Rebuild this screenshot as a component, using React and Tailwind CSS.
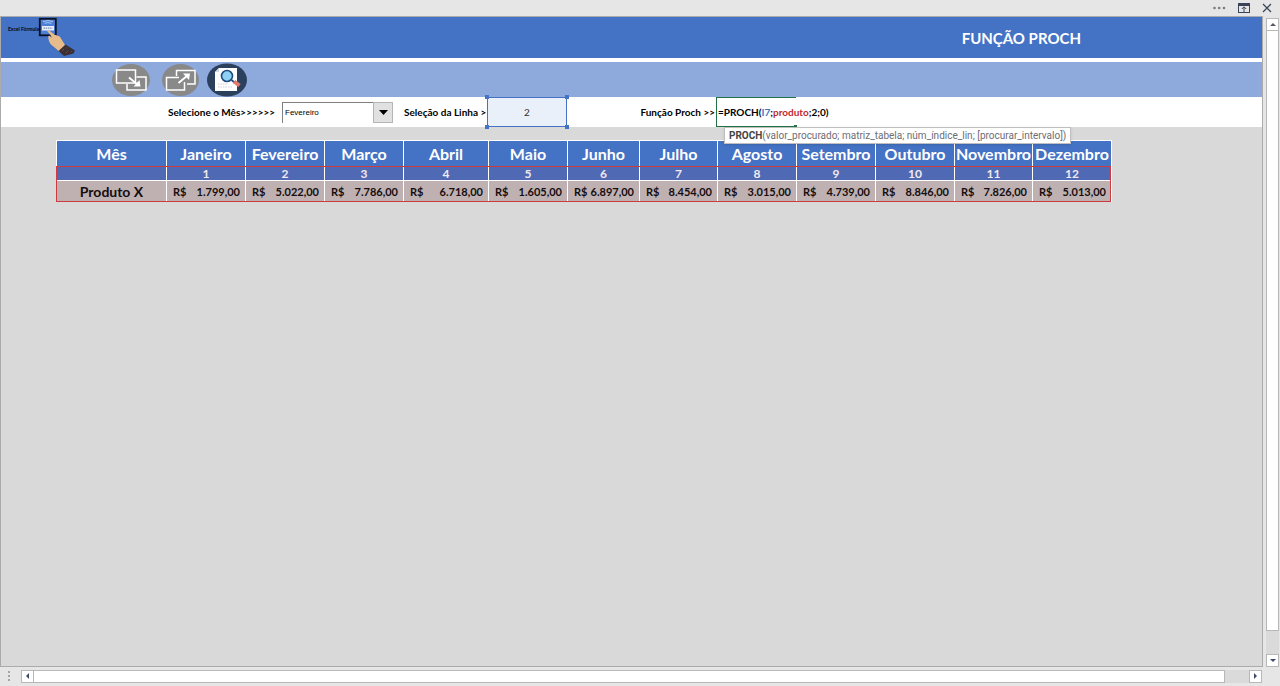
import { useState } from "react";

const MONTHS = [
  { name: "Janeiro", value: "1.799,00", col: "w-[79px]" },
  { name: "Fevereiro", value: "5.022,00", col: "w-[79px]" },
  { name: "Março", value: "7.786,00", col: "w-[79px]" },
  { name: "Abril", value: "6.718,00", col: "w-[85px]" },
  { name: "Maio", value: "1.605,00", col: "w-[79px]" },
  { name: "Junho", value: "6.897,00", col: "w-[72px]" },
  { name: "Julho", value: "8.454,00", col: "w-[78px]" },
  { name: "Agosto", value: "3.015,00", col: "w-[79px]" },
  { name: "Setembro", value: "4.739,00", col: "w-[79px]" },
  { name: "Outubro", value: "8.846,00", col: "w-[79px]" },
  { name: "Novembro", value: "7.826,00", col: "w-[78px]" },
  { name: "Dezembro", value: "5.013,00", col: "w-[79px]" },
];

function WindowBar() {
  return (
    <header className="flex h-4 shrink-0 items-center justify-end gap-3 pr-2 text-[#3b4358]">
      <button type="button" aria-label="Mais opções">
        <svg width="13" height="10" viewBox="0 0 13 10" fill="#7b7b7f">
          <circle cx="1.5" cy="5" r="1.3" />
          <circle cx="6.2" cy="5" r="1.3" />
          <circle cx="11" cy="5" r="1.3" />
        </svg>
      </button>
      <button type="button" aria-label="Opções de exibição">
        <svg width="12" height="10" viewBox="0 0 12 10" fill="none" stroke="currentColor">
          <rect x="0.5" y="0.5" width="11" height="9" />
          <path d="M0.5 2h11" strokeWidth="2" />
          <path d="M6 9V4M3.8 6L6 3.8 8.2 6" />
        </svg>
      </button>
      <button type="button" aria-label="Fechar">
        <svg width="10" height="10" viewBox="0 0 10 10" fill="none" stroke="currentColor" strokeWidth="1.2">
          <path d="M1 1l8 8M9 1L1 9" />
        </svg>
      </button>
    </header>
  );
}

function Logo() {
  return (
    <div className="flex items-start pl-[7px]">
      <span className="mt-2 w-[30px] text-[5px] leading-2 font-black whitespace-nowrap text-[#0b1020]">
        Excel Fórmula
      </span>
      <svg width="38" height="40" viewBox="0 0 38 40" aria-hidden="true">
        <rect x="1.8" y="1.8" width="16" height="16.5" fill="#4c7fd6" stroke="#0b1020" strokeWidth="1.8" />
        <path d="M5 4.5q5-2 10 0M6.5 6.3q3.5-1.5 7 0" stroke="#a9c8f5" strokeWidth="1" fill="none" />
        <rect x="4" y="9" width="12" height="4.5" fill="#e8effa" />
        <path d="M5.5 11.2h9" stroke="#7a8db0" strokeWidth="1.2" strokeDasharray="1.5 .7" />
        <path
          d="M9 14q1.200-1.500 2.800 0l4.500 3.500 5.500 2 5.500 9-6 6-6.500-5.500q-3.500-2-4.500-8-.3-2.500 1-2.500l2.200 2.500q.5-2-4.500-7z"
          fill="#e8bb8a"
        />
        <path d="M20.500 34l7-6.500 9.500 6-1.500 3-9.500 2.500z" fill="#3a3035" />
        <path d="M24 34l2-2M28 36l2-2M28 31.500l1-1M33 35l1-1" stroke="#7d4438" />
      </svg>
    </div>
  );
}

function Toolbar() {
  return (
    <div className="mt-1 flex h-[35px] shrink-0 items-center bg-[#8ea9db] pl-[111px]">
      <button type="button" aria-label="Recolher janela" className="mr-3">
        <svg width="38" height="32" viewBox="0 0 38 32">
          <ellipse cx="19" cy="16" rx="19" ry="16" fill="#898989" />
          <g fill="none" stroke="#fff" strokeWidth="1.5">
            <path d="M15 20v6h19V13h-9.5" />
            <rect x="4.500" y="6" width="19" height="13" />
            <path d="M17 13.500l9 7.500" strokeWidth="2" />
          </g>
          <path d="M28.500 22.500h-7l6-6.500z" fill="#fff" />
        </svg>
      </button>
      <button type="button" aria-label="Expandir janela" className="mr-2">
        <svg width="37" height="32" viewBox="0 0 37 32">
          <ellipse cx="18.500" cy="16" rx="18.500" ry="16" fill="#898989" />
          <g fill="none" stroke="#fff" strokeWidth="1.5">
            <path d="M14.500 12V6.500h18.500V20h-8" />
            <path d="M17 13.500H4.500V26h18v-8" />
            <path d="M16.500 19l9-7.500" strokeWidth="2" />
          </g>
          <path d="M28 9.500h-7l6 6.500z" fill="#fff" />
        </svg>
      </button>
      <button type="button" aria-label="Pesquisar">
        <svg width="40" height="34" viewBox="0 0 40 34">
          <ellipse cx="20" cy="17" rx="20" ry="16.5" fill="#2b405c" />
          <path d="M12 5h18v23H8V9z" fill="#fff" />
          <path d="M12 5v4H8z" fill="#cfd8e4" />
          <path d="M11 21h9M11 24h14" stroke="#c8d0da" strokeDasharray="1.5 1" />
          <circle cx="20" cy="13" r="5.5" fill="#8fd0f5" stroke="#1f4a80" strokeWidth="1.6" />
          <path d="M24.500 17l3 2.500" stroke="#1f4a80" strokeWidth="1.8" />
          <path d="M27 18.500l5.500 4" stroke="#e07a6c" strokeWidth="4" />
        </svg>
      </button>
    </div>
  );
}

function SelectionHandles() {
  return (
    <>
      <span className="pointer-events-none absolute -top-0.5 -left-0.5 size-1 bg-[#4472c4]" />
      <span className="pointer-events-none absolute -top-0.5 -right-0.5 size-1 bg-[#4472c4]" />
      <span className="pointer-events-none absolute -bottom-0.5 -left-0.5 size-1 bg-[#4472c4]" />
      <span className="pointer-events-none absolute -right-0.5 -bottom-0.5 size-1 bg-[#4472c4]" />
    </>
  );
}

function InputRow() {
  const [month, setMonth] = useState("Fevereiro");
  const [line, setLine] = useState("2");

  return (
    <div className="flex h-[30px] shrink-0 items-center bg-white pl-[167px] text-[10px] font-bold whitespace-nowrap text-black">
      <label htmlFor="month" className="w-[114px]">
        Selecione o Mês&gt;&gt;&gt;&gt;&gt;&gt;
      </label>
      <div className="relative mr-[11px] w-[111px]">
        <select
          id="month"
          value={month}
          onChange={(e) => setMonth(e.target.value)}
          className="block h-[21px] w-full appearance-none border-t border-l border-[#808080] bg-white pl-0.5 font-['Liberation_Sans',sans-serif] text-[8px] font-normal"
        >
          {MONTHS.map((m) => (
            <option key={m.name}>{m.name}</option>
          ))}
        </select>
        <span className="pointer-events-none absolute inset-y-0 right-0 flex w-5 items-center justify-center border border-[#b5b5b5] bg-[#e1e1e1]">
          <svg width="9" height="5" viewBox="0 0 9 5">
            <path d="M0 0h9L4.5 5z" />
          </svg>
        </span>
      </div>
      <label htmlFor="line" className="w-[83px]">
        Seleção da Linha &gt;
      </label>
      <div className="relative w-20 self-stretch">
        <input
          id="line"
          value={line}
          onChange={(e) => setLine(e.target.value)}
          className="size-full border border-[#4472c4] bg-[#e9f0f9] text-center font-normal text-[#333]"
        />
        <SelectionHandles />
      </div>
      <span id="formula-label" className="w-[149px] pr-px text-right">
        Função Proch &gt;&gt;
      </span>
      <div className="relative flex w-20 items-center self-stretch border-y border-l border-[#217346] pl-px">
        <div role="textbox" tabIndex={0} aria-labelledby="formula-label">
          =PROCH(<span className="text-[#4472c4]">I7</span>;
          <span className="text-[#c2272d]">produto</span>;2;0)
        </div>
        <span className="absolute -right-px -bottom-0.5 size-[3px] bg-[#217346]" />
        <div
          role="tooltip"
          className="absolute top-[29px] left-[7px] z-10 border border-[#bfbfbf] bg-white px-1 font-['Roboto',sans-serif] text-[10px] leading-[15px] font-normal text-[#6d6d75] shadow-sm"
        >
          <b className="text-[#444]">PROCH</b>(valor_procurado; matriz_tabela; núm_índice_lin; [procurar_intervalo])
        </div>
      </div>
    </div>
  );
}

function ProductTable() {
  return (
    <div className="relative mt-[13px] ml-[55px] w-[1055px] shrink-0">
      <table className="w-full table-fixed border-separate border-spacing-0 border-t border-r border-white text-center font-bold">
        <colgroup>
          <col className="w-[110px]" />
          {MONTHS.map((m) => (
            <col key={m.name} className={m.col} />
          ))}
        </colgroup>
        <thead>
          <tr className="h-[26px] bg-[#4472c4] text-[16px] leading-5 text-white">
            <th className="border-l border-white p-0">Mês</th>
            {MONTHS.map((m) => (
              <th key={m.name} className="border-l border-white p-0 whitespace-nowrap">
                {m.name}
              </th>
            ))}
          </tr>
        </thead>
        <tbody>
          <tr className="h-[14px] bg-[#4f69b5] text-[12px] leading-3 text-[#f3e9ee]">
            <td className="border-b border-l border-white p-0" />
            {MONTHS.map((m, i) => (
              <td key={m.name} className="border-b border-l border-white p-0">
                {i + 1}
              </td>
            ))}
          </tr>
          <tr className="h-[21px] bg-[#bfb1b2] leading-5 text-[#150d0f]">
            <th className="border-l border-white p-0 text-[14px]">Produto X</th>
            {MONTHS.map((m) => (
              <td key={m.name} className="border-l border-white py-0 pr-[5px] pl-1.5 text-[11px]">
                <div className="flex justify-between">
                  <span>R$</span>
                  <span>{m.value}</span>
                </div>
              </td>
            ))}
          </tr>
        </tbody>
      </table>
      <div className="pointer-events-none absolute inset-x-0 top-[26px] bottom-0 border border-[#cf3a40]" />
    </div>
  );
}

function VerticalScroll() {
  return (
    <div className="flex w-[17px] shrink-0 flex-col pt-0.5 pr-px pl-[3px]">
      <button type="button" aria-label="Rolar para cima" className="flex h-[13px] items-center justify-center border border-[#b8b8b8] bg-white">
        <svg width="6" height="3" viewBox="0 0 6 3" fill="#555a66">
          <path d="M0 3h6L3 0z" />
        </svg>
      </button>
      <div className="flex-1 bg-[#dadada] pb-[23px]">
        <div className="h-full border border-t-0 border-[#b8b8b8] bg-white" />
      </div>
      <button type="button" aria-label="Rolar para baixo" className="flex h-[13px] items-center justify-center border border-[#b8b8b8] bg-white">
        <svg width="6" height="3" viewBox="0 0 6 3" fill="#3f4a6b">
          <path d="M0 0h6L3 3z" />
        </svg>
      </button>
    </div>
  );
}

function HorizontalScroll() {
  return (
    <footer className="flex h-[19px] shrink-0 items-center pr-[18px] pb-px pl-2">
      <svg width="3" height="10" viewBox="0 0 3 10" fill="#a5a5a5" className="mr-2.5">
        <path d="M0 0h2v2H0zM0 4h2v2H0zM0 8h2v2H0z" />
      </svg>
      <button type="button" aria-label="Rolar para a esquerda" className="flex h-[13px] w-[13px] items-center justify-center border border-[#b8b8b8] bg-white">
        <svg width="3" height="6" viewBox="0 0 3 6" fill="#3f4a6b">
          <path d="M3 0v6L0 3z" />
        </svg>
      </button>
      <div className="h-[13px] flex-1 bg-[#dadada] pr-6">
        <div className="h-full border border-l-0 border-[#b8b8b8] bg-white" />
      </div>
      <button type="button" aria-label="Rolar para a direita" className="flex h-[13px] w-[13px] items-center justify-center border border-[#b8b8b8] bg-white">
        <svg width="3" height="6" viewBox="0 0 3 6" fill="#3f4a6b">
          <path d="M0 0v6l3-3z" />
        </svg>
      </button>
    </footer>
  );
}

export default function App() {
  return (
    <div className="flex h-screen flex-col overflow-hidden bg-[#e6e6e6] font-['Lato',sans-serif]">
      <WindowBar />
      <div className="flex min-h-0 flex-1">
        <main className="flex min-w-0 flex-1 flex-col overflow-hidden border border-[#ababab] bg-[#d9d9d9]">
          <div className="shrink-0 bg-white">
            <div className="flex h-[41px] justify-between bg-[#4472c4] pr-[181px]">
              <Logo />
              <h1 className="self-center pt-px text-[15px] font-bold text-white">FUNÇÃO PROCH</h1>
            </div>
            <Toolbar />
          </div>
          <InputRow />
          <ProductTable />
        </main>
        <VerticalScroll />
      </div>
      <HorizontalScroll />
    </div>
  );
}
